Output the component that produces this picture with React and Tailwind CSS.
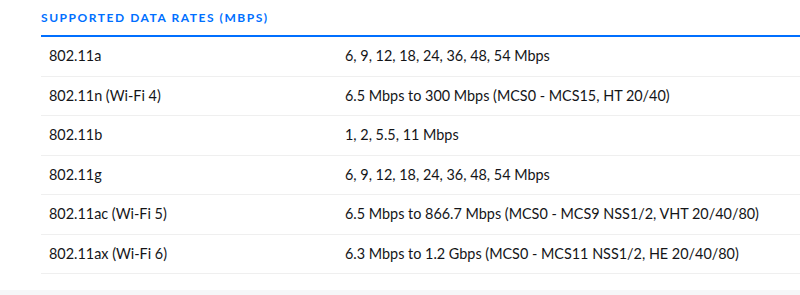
export default function App() {
  const rows = [
    ["802.11a", "6, 9, 12, 18, 24, 36, 48, 54 Mbps"],
    ["802.11n (Wi-Fi 4)", "6.5 Mbps to 300 Mbps (MCS0 - MCS15, HT 20/40)"],
    ["802.11b", "1, 2, 5.5, 11 Mbps"],
    ["802.11g", "6, 9, 12, 18, 24, 36, 48, 54 Mbps"],
    ["802.11ac (Wi-Fi 5)", "6.5 Mbps to 866.7 Mbps (MCS0 - MCS9 NSS1/2, VHT 20/40/80)"],
    ["802.11ax (Wi-Fi 6)", "6.3 Mbps to 1.2 Gbps (MCS0 - MCS11 NSS1/2, HE 20/40/80)"],
  ];
  return (
    <div className="w-[800px] h-[295px] bg-white overflow-hidden flex flex-col" style={{ fontFamily: "Lato, 'Open Sans', sans-serif" }}>
      <div className="pl-[41px] flex-1">
        <div className="h-[35px] pt-[10px] text-[12px] leading-[16px] font-bold tracking-[1.55px] text-[#006fff] uppercase">
          Supported Data Rates (Mbps)
        </div>
        <div className="border-t-2 border-[#006fff]">
          {rows.map(([a, b], i) => (
            <div key={i} className="flex h-[39.5px] items-center border-b border-[#efefef] text-[14.4px] text-[#141518]">
              <div className="w-[304px] pl-[8px]">{a}</div>
              <div>{b}</div>
            </div>
          ))}
        </div>
      </div>
      <div className="h-[5px] bg-[#f6f6f8]" />
    </div>
  );
}
